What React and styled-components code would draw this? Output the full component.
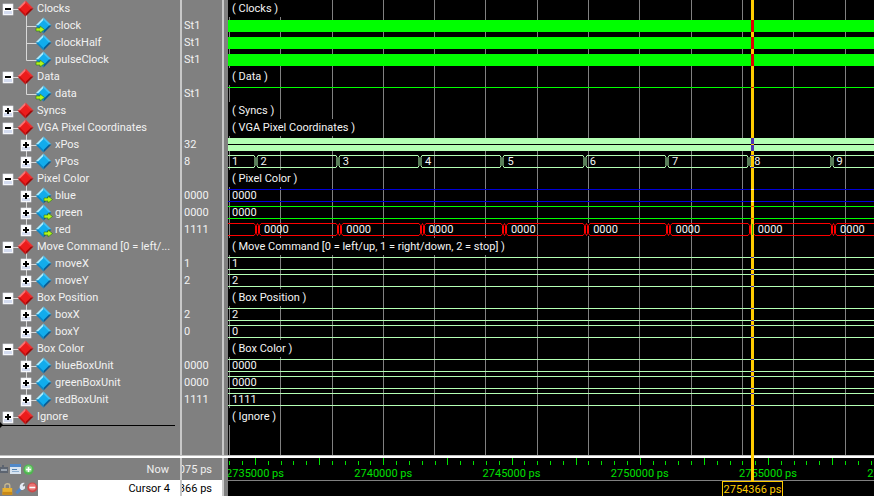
import React from "react";
import styled, { createGlobalStyle } from "styled-components";

const GlobalStyle = createGlobalStyle`
  html, body {
    margin: 0;
    padding: 0;
    background: #000000;
  }
  body {
    font-family: Roboto, "Liberation Sans", Arial, sans-serif;
    font-size: 11px;
  }
`;

const PALE = "#b4ffb4";
const BLUE = "#0000d8";
const LIME = "#00ff00";
const RED = "#ff0000";
const YELLOW = "#ffcc00";

const group = (name, label, open = true) => ({ type: "group", name, label, open });
const signal = (name, value, wave, extra = {}) => ({ type: "signal", name, value, wave, ...extra });

const rows = [
  group("Clocks", "( Clocks )"),
  signal("clock", "St1", { kind: "high" }, { arrow: "left" }),
  signal("clockHalf", "St1", { kind: "high" }),
  signal("pulseClock", "St1", { kind: "high" }, { arrow: "left", last: true }),
  group("Data", "( Data )"),
  signal("data", "St1", { kind: "line" }, { arrow: "left", last: true }),
  group("Syncs", "( Syncs )", false),
  group("VGA Pixel Coordinates", "( VGA Pixel Coordinates )"),
  signal("xPos", "32", { kind: "dense" }, { vector: true }),
  signal("yPos", "8", { kind: "count" }, { vector: true, last: true }),
  group("Pixel Color", "( Pixel Color )"),
  signal("blue", "0000", { kind: "bus", color: BLUE, text: "0000" }, { vector: true, arrow: "right" }),
  signal("green", "0000", { kind: "bus", color: LIME, text: "0000" }, { vector: true, arrow: "right" }),
  signal("red", "1111", { kind: "redbus" }, { vector: true, arrow: "right", last: true }),
  group("Move Command [0 = left/...", "( Move Command [0 = left/up, 1 = right/down, 2 = stop] )"),
  signal("moveX", "1", { kind: "bus", color: PALE, text: "1" }, { vector: true }),
  signal("moveY", "2", { kind: "bus", color: PALE, text: "2" }, { vector: true, last: true }),
  group("Box Position", "( Box Position )"),
  signal("boxX", "2", { kind: "bus", color: PALE, text: "2" }, { vector: true }),
  signal("boxY", "0", { kind: "bus", color: PALE, text: "0" }, { vector: true, last: true }),
  group("Box Color", "( Box Color )"),
  signal("blueBoxUnit", "0000", { kind: "bus", color: PALE, text: "0000" }, { vector: true }),
  signal("greenBoxUnit", "0000", { kind: "bus", color: PALE, text: "0000" }, { vector: true }),
  signal("redBoxUnit", "1111", { kind: "bus", color: PALE, text: "1111" }, { vector: true, last: true }),
  group("Ignore", "( Ignore )", false),
];

const cursorMarks = [
  { top: 20, height: 12, color: "#e00000" },
  { top: 37, height: 12, color: "#e00000" },
  { top: 54, height: 12, color: "#e00000" },
  { top: 87, height: 1, color: "#e00000" },
  { top: 138, height: 6, color: "#4f2fb4" },
  { top: 145, height: 6, color: "#4f2fb4" },
  { top: 155, height: 1, color: "#4f2fb4" },
  { top: 167, height: 1, color: "#4f2fb4" },
  { top: 189, height: 1, color: "#f0f0e0" },
  { top: 201, height: 1, color: "#f0f0e0" },
  { top: 206, height: 1, color: "#ff3000" },
  { top: 218, height: 1, color: "#ff3000" },
  { top: 257, height: 1, color: "#4f2fb4" },
  { top: 269, height: 1, color: "#4f2fb4" },
  { top: 274, height: 1, color: "#4f2fb4" },
  { top: 286, height: 1, color: "#4f2fb4" },
  { top: 308, height: 1, color: "#4f2fb4" },
  { top: 320, height: 1, color: "#4f2fb4" },
  { top: 325, height: 1, color: "#4f2fb4" },
  { top: 337, height: 1, color: "#4f2fb4" },
  { top: 359, height: 1, color: "#4f2fb4" },
  { top: 371, height: 1, color: "#4f2fb4" },
  { top: 376, height: 1, color: "#4f2fb4" },
  { top: 388, height: 1, color: "#4f2fb4" },
  { top: 393, height: 1, color: "#4f2fb4" },
  { top: 405, height: 1, color: "#4f2fb4" },
];

const Expander = ({ x, open }) => (
  <g>
    <rect x={x} y="4" width="10" height="11" fill="#ffffff" stroke="#e4e8f0" strokeWidth="0.6" />
    <rect x={x + 1} y="11" width="8" height="3" fill="#d4dcf0" />
    <rect x={x + 2} y="8" width="6" height="2" fill="#000000" />
    {!open && <rect x={x + 4} y="6" width="2" height="6" fill="#000000" />}
  </g>
);

const Diamond = ({ cx, palette }) => (
  <g>
    <polygon points={`${cx - 8},8.5 ${cx},0.5 ${cx},8.5`} fill={palette[0]} />
    <polygon points={`${cx},0.5 ${cx + 8},8.5 ${cx},8.5`} fill={palette[1]} />
    <polygon points={`${cx + 8},8.5 ${cx},16.5 ${cx},8.5`} fill={palette[3]} />
    <polygon points={`${cx},16.5 ${cx - 8},8.5 ${cx},8.5`} fill={palette[2]} />
    <polygon points={`${cx - 5.5},8.5 ${cx},3 ${cx + 5.5},8.5 ${cx},14`} fill={palette[4]} />
  </g>
);

const redPalette = ["#ff7070", "#f03030", "#c81010", "#a00808", "#ec1c1c"];
const bluePalette = ["#a8ecff", "#40c0f4", "#0a88c8", "#085c94", "#12acec"];

const GroupGlyph = ({ open }) => (
  <svg width="37" height="17" viewBox="0 0 37 17">
    <path d="M13 9.5H19" stroke="#d8d8d8" fill="none" />
    {open && <path d="M26.5 15V17" stroke="#d8d8d8" fill="none" />}
    <Expander x={3} open={open} />
    <Diamond cx={25.5} palette={redPalette} />
  </svg>
);

const Arrow = ({ x }) => (
  <polygon
    points={`${x},11 ${x + 4},11 ${x + 4},9 ${x + 8.5},12.5 ${x + 4},16 ${x + 4},14 ${x},14`}
    fill="#b4f41c"
    stroke="#2a7a10"
    strokeWidth="0.6"
  />
);

const SignalGlyph = ({ last, vector, arrow }) => (
  <svg width="55" height="17" viewBox="0 0 55 17">
    <path d={last ? "M26.5 0V9.5H37" : "M26.5 0V17M26.5 9.5H37"} stroke="#d8d8d8" fill="none" />
    {vector && <Expander x={21} open={false} />}
    <Diamond cx={43.5} palette={bluePalette} />
    {arrow === "left" && <Arrow x={36} />}
    {arrow === "right" && <Arrow x={44} />}
  </svg>
);

const Transition = ({ color, double }) =>
  double ? (
    <MarkSvg width="7" height="13" viewBox="0 0 7 13">
      <path
        d="M0 0.5L1.5 2.5V10.5L0 12.5M3.5 0.5L2.5 2.5V10.5L3.5 12.5M3.5 0.5L4.5 2.5V10.5L3.5 12.5M7 0.5L5.5 2.5V10.5L7 12.5"
        stroke={color}
        fill="none"
      />
    </MarkSvg>
  ) : (
    <MarkSvg width="4" height="13" viewBox="0 0 4 13">
      <path d="M0 0.5L1 2.5V10.5L0 12.5M4 0.5L3 2.5V10.5L4 12.5" stroke={color} fill="none" />
    </MarkSvg>
  );

const SEGMENTS = 9;

const SegmentedBus = ({ color, first, firstText, texts, double }) => (
  <BusRow>
    <BusSegment $color={color} $width={first}>
      {firstText && <FirstText>{firstText}</FirstText>}
    </BusSegment>
    {texts.map((text, i) => (
      <BusSegment key={i} $color={color} $width={82.3}>
        <Transition color={color} double={double} />
        <SegmentText>{text}</SegmentText>
      </BusSegment>
    ))}
  </BusRow>
);

const Wave = ({ row }) => {
  if (row.type === "group") {
    return (
      <Track>
        <GroupLabel>{row.label}</GroupLabel>
      </Track>
    );
  }
  const { wave } = row;
  return (
    <Track>
      {wave.kind === "high" && <HighBar />}
      {wave.kind === "line" && <HighLine />}
      {wave.kind === "dense" && <DenseBus />}
      {wave.kind === "bus" && (
        <Bus $color={wave.color}>
          <BusText>{wave.text}</BusText>
        </Bus>
      )}
      {wave.kind === "count" && (
        <SegmentedBus
          color={PALE}
          first={25.5}
          firstText="1"
          texts={Array.from({ length: SEGMENTS }, (_, i) => String(i + 2))}
        />
      )}
      {wave.kind === "redbus" && (
        <SegmentedBus color={RED} first={26} double texts={Array.from({ length: SEGMENTS }, () => "0000")} />
      )}
    </Track>
  );
};

const majorTicks = Array.from({ length: 66 }, (_, i) => {
  const x = 229.35 - 228 + i * 12.825;
  return { x: Math.round(x) + 0.5, major: i % 5 === 2 };
});

const timeLabels = ["2735000 ps", "2740000 ps", "2745000 ps", "2750000 ps", "2755000 ps", "2760000 ps"];

const App = () => {
  return (
    <Frame>
      <GlobalStyle />
      <Upper>
        <NamesPane>
          {rows.map((row) => (
            <NameRow key={row.name}>
              {row.type === "group" ? (
                <GroupGlyph open={row.open} />
              ) : (
                <SignalGlyph last={row.last} vector={row.vector} arrow={row.arrow} />
              )}
              <NameText>{row.name}</NameText>
            </NameRow>
          ))}
          <InsertLine />
        </NamesPane>
        <VDivider />
        <ValuesPane>
          {rows.map((row) => (
            <ValueRow key={row.name}>{row.value}</ValueRow>
          ))}
        </ValuesPane>
        <VDivider />
        <Gutter />
        <WavePane>
          {rows.map((row) => (
            <Wave key={row.name} row={row} />
          ))}
        </WavePane>
      </Upper>
      <HDivider />
      <Lower>
        <FooterNames>
          <NowRow>
            <IconStrip>
              <svg width="8" height="14" viewBox="0 0 8 14">
                <path d="M0 5H2V3H4V5H8V11H0Z" fill="#5c6470" />
                <rect x="1" y="7" width="6" height="2" fill="#9aa4b0" />
              </svg>
              <svg width="11" height="12" viewBox="0 0 11 12">
                <rect x="0" y="1" width="11" height="10" fill="#d8e4f0" />
                <rect x="0" y="1" width="11" height="3" fill="#5088c8" />
                <rect x="2" y="6" width="5" height="1" fill="#5080b0" />
                <rect x="2" y="8" width="7" height="1" fill="#8fb0d0" />
              </svg>
              <svg width="11" height="11" viewBox="0 0 11 11">
                <circle cx="5.5" cy="5.5" r="5.2" fill="#50b450" />
                <circle cx="5.5" cy="5" r="3.6" fill="#84d884" />
                <path d="M3 5.5H8M5.5 3V8" stroke="#ffffff" strokeWidth="1.5" />
              </svg>
            </IconStrip>
            <FooterLabel>Now</FooterLabel>
          </NowRow>
          <CursorRow>
            <IconBlock>
              <svg width="11" height="13" viewBox="0 0 11 13">
                <path d="M3 6V3.5C3 1 8 1 8 3.5V6" stroke="#c8b890" strokeWidth="1.4" fill="none" />
                <rect x="0.5" y="6" width="10" height="7" fill="#e8b030" />
                <rect x="0.5" y="10" width="10" height="3" fill="#c88818" />
              </svg>
              <svg width="11" height="13" viewBox="0 0 11 13">
                <path d="M1.5 11.5L7 5.5" stroke="#4f86c8" strokeWidth="3" />
                <path d="M5 6.5C4 2.5 7 0 10 0.8L7.8 3.2L9 4.6L11 2.6C11.6 6 9 8.5 6.5 8Z" fill="#e4eaf4" />
              </svg>
              <svg width="11" height="11" viewBox="0 0 11 11">
                <circle cx="5.5" cy="5.5" r="5.2" fill="#cf4848" />
                <circle cx="5.5" cy="5" r="3.6" fill="#ea7474" />
                <path d="M2.5 5.5H8.5" stroke="#ffffff" strokeWidth="1.6" />
              </svg>
            </IconBlock>
            <FooterValueCell>Cursor 4</FooterValueCell>
          </CursorRow>
        </FooterNames>
        <VDivider />
        <FooterValues>
          <NowValue>2755075 ps</NowValue>
          <CursorValue>2754366 ps</CursorValue>
        </FooterValues>
        <VDivider />
        <Gutter />
        <AxisPane>
          <Ruler>
            <RulerTicks width="646" height="8" viewBox="0 0 646 8">
              {majorTicks.map((t) => (
                <path
                  key={t.x}
                  d={`M${t.x} ${t.major ? 0 : 3}V7`}
                  stroke="#00e000"
                  fill="none"
                />
              ))}
            </RulerTicks>
            <RulerLabels>
              {timeLabels.map((label) => (
                <RulerLabel key={label}>{label}</RulerLabel>
              ))}
            </RulerLabels>
          </Ruler>
          <CursorStrip>
            <CursorTag>2754366 ps</CursorTag>
          </CursorStrip>
        </AxisPane>
      </Lower>
      <CursorLine>
        {cursorMarks.map((m) => (
          <CursorMark key={m.top} $top={m.top} $height={m.height} $color={m.color} />
        ))}
        <CursorSliver />
      </CursorLine>
    </Frame>
  );
};

const Frame = styled.div`
  position: relative;
  width: 874px;
  height: 496px;
  overflow: hidden;
  display: flex;
  flex-direction: column;
  background: #808080;
`;

const Upper = styled.div`
  display: flex;
  height: 455px;
`;

const NamesPane = styled.div`
  width: 180px;
  background: #808080;
  overflow: hidden;
`;

const NameRow = styled.div`
  display: flex;
  align-items: flex-start;
  height: 17px;
  white-space: nowrap;
`;

const NameText = styled.span`
  color: #f2f2f2;
  line-height: 17px;
`;

const InsertLine = styled.div`
  position: relative;
  height: 1px;
  width: 175px;
  background: #000000;
  &::before {
    content: "";
    position: absolute;
    left: 0;
    top: -3px;
    border-left: 3px solid #000000;
    border-top: 3px solid transparent;
    border-bottom: 3px solid transparent;
  }
`;

const VDivider = styled.div`
  flex: 0 0 2px;
  background: #c8c8c8;
`;

const ValuesPane = styled.div`
  width: 40px;
  background: #808080;
`;

const ValueRow = styled.div`
  height: 17px;
  line-height: 17px;
  padding-left: 2px;
  color: #f2f2f2;
`;

const Gutter = styled.div`
  flex: 0 0 4px;
  background: #808080;
`;

const WavePane = styled.div`
  flex: 1;
  min-width: 0;
  overflow: hidden;
  background-color: #000000;
  background-image: repeating-linear-gradient(
    to right,
    #808080 0,
    #808080 1px,
    #000000 1px,
    #000000 51.3px
  );
  background-position: 1px 0;
`;

const Track = styled.div`
  height: 17px;
  overflow: hidden;
`;

const GroupLabel = styled.span`
  display: inline-block;
  margin-left: 1px;
  padding: 0 3px;
  height: 17px;
  line-height: 17px;
  background: #000000;
  color: #f4f4f4;
  white-space: nowrap;
`;

const HighBar = styled.div`
  margin-top: 3px;
  height: 12px;
  background: ${LIME};
`;

const HighLine = styled.div`
  margin-top: 2px;
  height: 1px;
  background: ${LIME};
`;

const DenseBus = styled.div`
  margin-top: 2px;
  height: 13px;
  background: linear-gradient(
    to bottom,
    ${PALE} 0,
    ${PALE} 6px,
    #000000 6px,
    #000000 7px,
    ${PALE} 7px,
    ${PALE} 13px
  );
`;

const Bus = styled.div`
  box-sizing: border-box;
  margin-top: 2px;
  height: 13px;
  border-top: 1px solid ${(p) => p.$color};
  border-bottom: 1px solid ${(p) => p.$color};
`;

const BusText = styled.span`
  display: block;
  width: max-content;
  margin-left: 4px;
  height: 11px;
  line-height: 11px;
  color: #f4f4f4;
  background: #000000;
`;

const BusRow = styled.div`
  display: flex;
  margin-top: 2px;
  height: 13px;
  width: 900px;
`;

const BusSegment = styled.div`
  box-sizing: border-box;
  flex: 0 0 ${(p) => p.$width}px;
  display: flex;
  height: 13px;
  border-top: 1px solid ${(p) => p.$color};
  border-bottom: 1px solid ${(p) => p.$color};
`;

const MarkSvg = styled.svg`
  flex: none;
  margin-top: -1px;
  background: #000000;
`;

const FirstText = styled.span`
  margin-left: 4px;
  line-height: 11px;
  color: #f4f4f4;
`;

const SegmentText = styled.span`
  margin-left: 3px;
  line-height: 11px;
  color: #f4f4f4;
`;

const HDivider = styled.div`
  height: 3px;
  background: linear-gradient(to bottom, #c0c0c0 0, #c0c0c0 1px, #ffffff 1px, #ffffff 3px);
`;

const Lower = styled.div`
  flex: 1;
  display: flex;
  min-height: 0;
`;

const FooterNames = styled.div`
  width: 180px;
  display: flex;
  flex-direction: column;
`;

const NowRow = styled.div`
  height: 22px;
  display: flex;
  align-items: center;
`;

const IconStrip = styled.div`
  flex: 0 0 38px;
  display: flex;
  align-items: center;
  gap: 2px;
  overflow: hidden;
`;

const FooterLabel = styled.span`
  flex: 1;
  text-align: right;
  padding-right: 11px;
  color: #f0f0f0;
`;

const CursorRow = styled.div`
  height: 16px;
  display: flex;
`;

const IconBlock = styled.div`
  flex: 0 0 36px;
  padding: 2px 0 0 2px;
  display: flex;
  align-items: flex-start;
  gap: 2px;
  background: #808080;
  overflow: hidden;
`;

const FooterValueCell = styled.span`
  flex: 1;
  background: #ffffff;
  text-align: right;
  padding-right: 10px;
  line-height: 18px;
  color: #000000;
`;

const FooterValues = styled.div`
  width: 40px;
  display: flex;
  flex-direction: column;
`;

const NowValue = styled.div`
  height: 22px;
  display: flex;
  justify-content: flex-end;
  align-items: center;
  padding-right: 10px;
  overflow: hidden;
  white-space: nowrap;
  color: #f0f0f0;
`;

const CursorValue = styled(NowValue)`
  height: 16px;
  line-height: 18px;
  align-items: flex-start;
  background: #ffffff;
  color: #000000;
`;

const AxisPane = styled.div`
  flex: 1;
  min-width: 0;
  background: #000000;
  display: flex;
  flex-direction: column;
`;

const Ruler = styled.div`
  height: 22px;
  flex: none;
  border-bottom: 1px solid #808080;
  overflow: hidden;
`;

const RulerTicks = styled.svg`
  display: block;
`;

const RulerLabels = styled.div`
  display: flex;
  margin-left: -37.1px;
  margin-top: 1px;
`;

const RulerLabel = styled.span`
  flex: 0 0 128.25px;
  text-align: center;
  color: #00e000;
  line-height: 14px;
  white-space: nowrap;
`;

const CursorStrip = styled.div`
  flex: 1;
  min-height: 0;
  overflow: hidden;
`;

const CursorTag = styled.div`
  box-sizing: border-box;
  width: 61px;
  height: 18px;
  margin-left: 494px;
  border: 1px solid ${YELLOW};
  color: ${YELLOW};
  text-align: center;
  line-height: 15px;
  white-space: nowrap;
`;

const CursorLine = styled.div`
  position: absolute;
  left: 751px;
  top: 0;
  width: 3px;
  height: 481px;
  background: ${YELLOW};
`;

const CursorMark = styled.div`
  position: absolute;
  left: 0;
  width: 3px;
  top: ${(p) => p.$top}px;
  height: ${(p) => p.$height}px;
  background: ${(p) => p.$color};
`;

const CursorSliver = styled.div`
  position: absolute;
  left: 1px;
  top: 224px;
  width: 1px;
  height: 11px;
  background: #30c000;
`;

export default App;
